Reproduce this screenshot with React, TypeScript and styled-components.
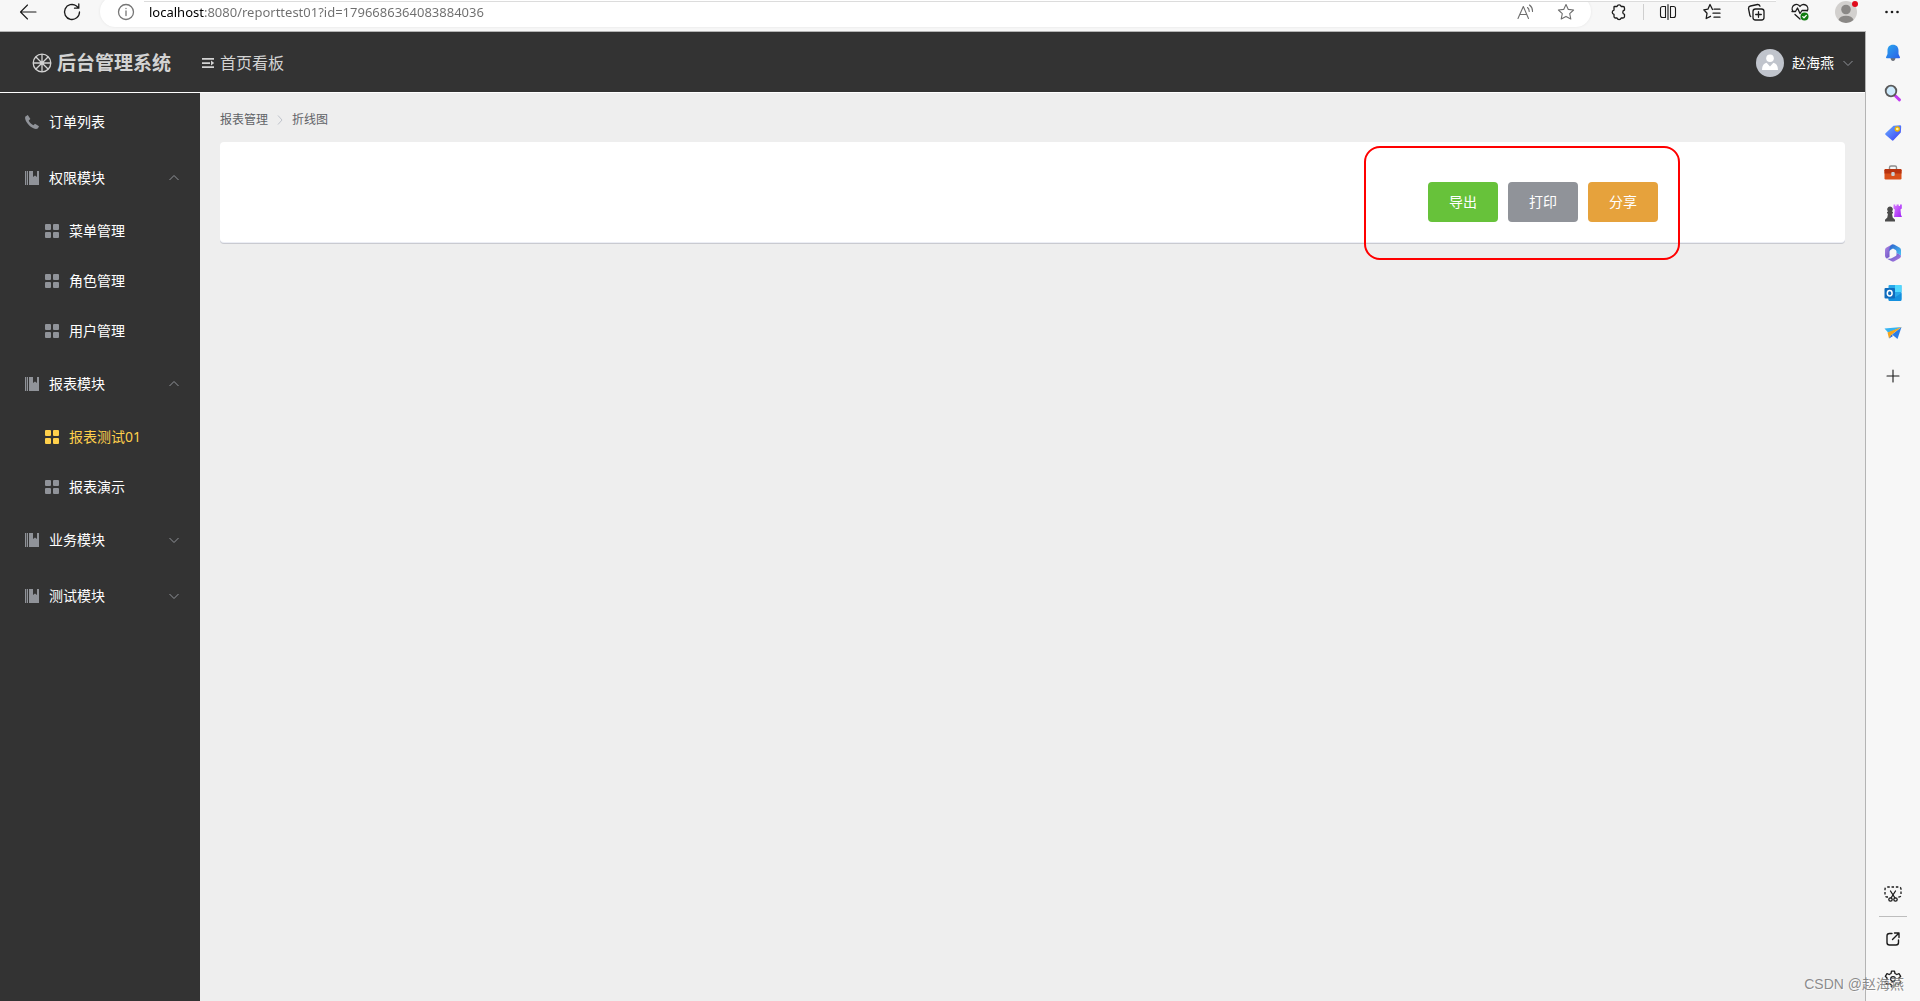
import React from "react";
import type { ReactNode } from "react";
import styled, { createGlobalStyle } from "styled-components";

const Global = createGlobalStyle`
  * { box-sizing: border-box; }
  body { margin: 0; overflow: hidden; font-family: "Noto Sans", "Noto Sans CJK SC", sans-serif; }
  button, input { font-family: inherit; }
  a { color: inherit; text-decoration: none; }
`;

const Page = styled.div`
  position: relative;
  height: 100vh;
  display: flex;
  flex-direction: column;
  background: #f7f7f7;
`;

/* ---------- browser toolbar ---------- */

const IconButton = styled.button<{ $color?: string; $wide?: boolean }>`
  flex: none;
  display: grid;
  place-items: center;
  width: ${(p) => (p.$wide ? 28 : 24)}px;
  height: 24px;
  padding: 0;
  border: 0;
  background: none;
  color: ${(p) => p.$color ?? "#1b1b1b"};
  svg { display: block; overflow: visible; }
`;

const BrowserBar = styled.div`
  position: relative;
  flex: none;
  display: flex;
  align-items: center;
  gap: 20px;
  height: 31px;
  padding: 0 16px 8px;
`;

const TabEdge = styled.div`
  position: absolute;
  left: 144px;
  right: 144px;
  top: 0;
  height: 2px;
  background: #fff;
  border-bottom: 1px solid #dcdcdc;
`;

const AddressPill = styled.div`
  flex: 1;
  display: flex;
  align-items: center;
  gap: 16px;
  height: 31px;
  margin: 0 -4px;
  padding: 0 13px 0 14px;
  border-radius: 16px;
  background: #fff;
  box-shadow: 0 0 3px rgba(0, 0, 0, 0.08);
`;

const Address = styled.input`
  flex: 1;
  min-width: 0;
  height: 24px;
  margin-left: -5px;
  padding: 0;
  border: 0;
  outline: 0;
  font-size: 13px;
  line-height: 20px;
  color: #6e6e6e;
  background: linear-gradient(to right, #000 55px, #6e6e6e 55px);
  background-clip: text;
  -webkit-background-clip: text;
  -webkit-text-fill-color: transparent;
`;

const Split = styled.span`
  flex: none;
  width: 1px;
  height: 16px;
  margin: 0 -8px;
  background: #cfcfcf;
`;

/* ---------- application ---------- */

const Body = styled.div`
  flex: 1;
  min-height: 0;
  display: flex;
`;

const Shell = styled.div`
  flex: 1;
  min-width: 0;
  display: flex;
  flex-direction: column;
  border-top: 1px solid #b4b4b4;
  border-right: 1px solid #b4b4b4;
`;

const Header = styled.header`
  flex: none;
  display: flex;
  align-items: center;
  height: 61px;
  padding: 2px 11px 0 32px;
  background: #333;
  border-bottom: 1px solid #fff;
  color: #d3d3d3;
`;

const Brand = styled.h1`
  display: flex;
  align-items: center;
  gap: 5px;
  width: 169px;
  margin: 0;
  font-size: 19px;
  line-height: 24px;
`;

const HomeLink = styled.a`
  display: flex;
  align-items: center;
  gap: 5px;
  margin-right: auto;
  font-size: 16px;
  line-height: 24px;
`;

const User = styled.button`
  display: flex;
  align-items: center;
  gap: 8px;
  padding: 0;
  border: 0;
  background: none;
  color: #fff;
  font-size: 14px;
  line-height: 20px;
`;

const Columns = styled.div`
  flex: 1;
  min-height: 0;
  display: flex;
`;

const Sidebar = styled.nav`
  flex: none;
  width: 200px;
  padding-top: 1px;
  background: #333;
`;

const MenuItem = styled.a<{ $sub?: boolean; $active?: boolean }>`
  display: flex;
  align-items: center;
  gap: 10px;
  height: ${(p) => (p.$sub ? 50 : 56)}px;
  padding: 0 20px 0 ${(p) => (p.$sub ? 45 : 25)}px;
  font-size: 14px;
  line-height: 20px;
  color: ${(p) => (p.$active ? "#ffd04b" : "#fff")};
  svg { flex: none; color: ${(p) => (p.$active ? "#ffd04b" : "#909399")}; }
  span { flex: 1; }
`;

const Main = styled.main`
  flex: 1;
  min-width: 0;
  padding: 17px 20px;
  background: #eee;
`;

const Crumbs = styled.nav`
  display: flex;
  align-items: center;
  gap: 6px;
  margin-bottom: 12px;
  font-size: 12px;
  line-height: 20px;
  color: #606266;
`;

const Card = styled.section`
  display: flex;
  justify-content: flex-end;
  padding: 40px 187px 20px 20px;
  border-radius: 4px;
  background: #fff;
  box-shadow: 0 1px 0 #eceef5, 0 2px 0 #c9cad0;
`;

const Actions = styled.div`
  position: relative;
  display: flex;
  gap: 10px;
`;

const Action = styled.button<{ $bg: string }>`
  height: 40px;
  padding: 0 21px;
  border: 0;
  border-radius: 4px;
  background: ${(p) => p.$bg};
  color: #fff;
  font-size: 14px;
  line-height: 20px;
`;

const Marker = styled.div`
  position: absolute;
  inset: -36px -22px -38px -64px;
  border: 2px solid #f00;
  border-radius: 16px;
  pointer-events: none;
`;

/* ---------- browser side rail ---------- */

const Rail = styled.aside`
  flex: none;
  display: flex;
  flex-direction: column;
  gap: 19px;
  width: 54px;
  padding: 10px 0;
`;

const RailGroup = styled.div<{ $end?: boolean }>`
  display: flex;
  flex-direction: column;
  align-items: center;
  gap: 16px;
  margin-top: ${(p) => (p.$end ? "auto" : 0)};
`;

const RailRule = styled.div`
  width: 28px;
  height: 1px;
  margin: -6px 0;
  background: #bdbdbd;
`;

const Watermark = styled.div`
  position: absolute;
  right: 16px;
  bottom: 7px;
  font-family: "Liberation Sans", "Noto Sans CJK SC", sans-serif;
  font-size: 14px;
  line-height: 20px;
  color: rgba(120, 120, 120, 0.85);
  text-shadow: 1px 1px 0 rgba(255, 255, 255, 0.7);
  pointer-events: none;
`;

/* ---------- icons ---------- */

const Line = ({ d, size = 18, w = 1.1, children }: { d?: string; size?: number; w?: number; children?: ReactNode }) => (
  <svg width={size} height={size} viewBox="0 0 18 18" fill="none" stroke="currentColor" strokeWidth={w} strokeLinecap="round" strokeLinejoin="round">
    {d && <path d={d} />}
    {children}
  </svg>
);

const chevrons = {
  up: "M1.500 8 6 3.500 10.500 8",
  down: "M1.500 4 6 8.500 10.500 4",
  right: "M4 1.500 8 6 4 10.500",
};
const Chevron = ({ dir, color = "#909399" }: { dir: keyof typeof chevrons; color?: string }) => (
  <svg width="12" height="12" viewBox="0 0 12 12" fill="none" stroke={color}>
    <path d={chevrons[dir]} />
  </svg>
);

const Phone = () => (
  <svg width="14" height="14" viewBox="0 0 14 14" fill="currentColor">
    <path d="M.4 1.400 2.800 0 5.400 4 3.700 5.600C4.600 7.600 6.200 9.200 8.400 10.300L10 8.700 14 11.200 13 13.300C11.800 14.200 10 14 8.400 13.300 4.800 11.600 1.400 8 .3 4.200 0 3 0 2.200.4 1.400Z" />
  </svg>
);
const Book = () => (
  <svg width="14" height="14" viewBox="0 0 14 14" fill="currentColor">
    <path d="M0 0H1V14H0ZM1.700 0H3V14H1.700ZM4 0H8V6L10 4.600 12 6V0H14V14H4Z" />
  </svg>
);
const Tiles = () => (
  <svg width="14" height="14" viewBox="0 0 14 14" fill="currentColor">
    <rect width="6" height="6" rx="1" />
    <rect x="8" width="6" height="6" rx="1" />
    <rect y="8" width="6" height="6" rx="1" />
    <rect x="8" y="8" width="6" height="6" rx="1" />
  </svg>
);

const Wheel = () => (
  <svg width="20" height="20" viewBox="0 0 20 20" fill="none" stroke="currentColor" strokeWidth="1.300">
    <circle cx="10" cy="10" r="8.800" />
    <path d="M10 1v18M1 10h18M3.700 3.700l12.600 12.600M16.300 3.700 3.700 16.300" />
    <circle cx="10" cy="10" r="1.800" fill="currentColor" stroke="none" />
  </svg>
);
const Unfold = () => (
  <svg width="14" height="14" viewBox="0 0 14 14" fill="currentColor">
    <path d="M1 2h12v1.700H1ZM1 6.200h8v1.700H1ZM1 10.300h12V12H1ZM10 4.600 13.200 7 10 9.400Z" />
  </svg>
);
const UserAvatar = () => (
  <svg width="28" height="28" viewBox="0 0 28 28">
    <circle cx="14" cy="14" r="14" fill="#c0c4cc" />
    <circle cx="14" cy="9.200" r="3.800" fill="#fff" />
    <path d="M6 20.500C6.200 16.500 8 14.300 10.600 13.800L14 17.500 17.400 13.800C20 14.300 21.800 16.500 22 20.500Q22 21 21.400 21H6.600Q6 21 6 20.500Z" fill="#fff" />
  </svg>
);

const ReadAloud = () => (
  <Line>
    <path d="M1 15.500 6.300 3.500 11.500 15.500M3 11.500h6.600M10.500 4.500Q12.300 6 12.200 8.500M12.500 2Q15.700 4.500 15.500 8.500" />
  </Line>
);
const starPath = "M9 1.500 11.300 6.400 16.600 7 12.700 10.700 13.800 16 9 13.400 4.200 16 5.300 10.700 1.400 7 6.700 6.400Z";
const Puzzle = () => (
  <Line w={1.3} d="M4.500 3.500H7A2.200 2.200 0 0 1 11.200 3.500H13A1.500 1.500 0 0 1 14.500 5V7A2.200 2.200 0 0 0 14.500 11.300V13.500A1.500 1.500 0 0 1 13 15H11.200A2.200 2.200 0 0 1 7 15H5.500A1.500 1.500 0 0 1 4 13.500V11.400A2.200 2.200 0 0 1 4 7.100V4Q4 3.500 4.500 3.500Z" />
);
const SplitScreen = () => (
  <Line w={1.1} d="M6.500 3.500H3.500A2 2 0 0 0 1.500 5.500V12.500A2 2 0 0 0 3.500 14.500H6.500ZM11.500 3.500H14.500A2 2 0 0 1 16.500 5.500V12.500A2 2 0 0 1 14.500 14.500H11.500ZM9 1.500V16.500" />
);
const Favorites = () => (
  <Line w={1.3} d="M9.500 6.500 7 1.500 4.900 6.200.8 6.800 4 10.300 3.200 15.500 7.500 13.300M11 6.200h6M10 10.200h7M11 14.200h6" />
);
const Collections = () => (
  <Line w={1.3}>
    <rect x="6" y="6" width="11" height="11" rx="2.500" />
    <path d="M11.500 8.700v5.600M8.700 11.500h5.600M3.700 13.500A2.500 2.500 0 0 1 2.700 11.500L1.500 5.500A2.500 2.500 0 0 1 3.500 3L10.500 1.500A2.500 2.500 0 0 1 13 3.200" />
  </Line>
);
const Essentials = () => (
  <Line w={1.3}>
    <path d="M1.800 8A4.200 4.200 0 0 1 9 3.500 4.200 4.200 0 0 1 16.200 8M1 8.500H4.500L6.500 5 9 10.500 11 7.500H16M4 11.500 9 16" />
    <circle cx="13.500" cy="13.500" r="4" fill="#107c10" stroke="none" />
    <path d="M11.800 13.600 13 14.800 15.300 12.400" stroke="#fff" />
  </Line>
);
const Profile = () => (
  <svg width="22" height="22" viewBox="0 0 22 22">
    <circle cx="11" cy="11" r="11" fill="#d2d0ce" />
    <circle cx="11" cy="8.500" r="4.800" fill="#8a8886" />
    <path d="M3.500 19C4.500 16 7 14.800 11 14.800S17.500 16 18.500 19A11 11 0 0 1 3.500 19Z" fill="#8a8886" />
    <circle cx="20" cy="3" r="3" fill="#e00b1c" />
  </svg>
);

const Art = ({ children }: { children: ReactNode }) => (
  <svg width="18" height="18" viewBox="0 0 18 18">{children}</svg>
);
const Grad = ({ id, from, to }: { id: string; from: string; to: string }) => (
  <linearGradient id={id} x1="0" y1="0" x2="1" y2="1">
    <stop stopColor={from} />
    <stop offset="1" stopColor={to} />
  </linearGradient>
);

const Bell = () => (
  <Art>
    <Grad id="bell" from="#2aa8ee" to="#2a5fe8" />
    <path d="M6.500 14h5Q11 17 9 17T6.500 14Z" fill="#6b6f78" />
    <path d="M9 .8C5.500.8 3.500 3.200 3.500 6.500V10L2 13.200Q1.800 14.200 2.800 14.200H15.200Q16.200 14.200 16 13.200L14.500 10V6.500C14.500 3.200 12.500.8 9 .8Z" fill="url(#bell)" />
  </Art>
);
const Search = () => (
  <Art>
    <path d="M11 11.500 15.500 15.800" stroke="#c13bf0" strokeWidth="3" strokeLinecap="round" />
    <circle cx="7" cy="7" r="5.300" fill="#cdeafc" stroke="#5a5a5a" strokeWidth="1.800" />
  </Art>
);
const Tag = () => (
  <Art>
    <Grad id="tag" from="#6ab2ff" to="#3a3cf5" />
    <path d="M9.500 1.800 16 1.200Q17.200 1.200 17.200 2.400L16.800 8.500 9.500 16.300Q8.700 17 7.900 16.300L1.500 10.800Q.7 10 1.500 9.200Z" fill="url(#tag)" />
    <circle cx="13.300" cy="5" r="2" fill="#fff3b0" stroke="#f2b600" strokeWidth="1.300" />
  </Art>
);
const Toolbox = () => (
  <Art>
    <path d="M5.500 5V3.500Q5.500 2 7 2H11Q12.500 2 12.500 3.500V5" fill="none" stroke="#8c8c8c" strokeWidth="1.400" />
    <rect x=".5" y="5" width="17" height="10.500" rx="1.200" fill="#d9501a" />
    <path d="M.5 6.200Q.5 5 1.700 5H16.300Q17.500 5 17.500 6.200V9.500H.5Z" fill="#b8330f" />
    <rect x="7.300" y="8" width="3.400" height="4" rx="1" fill="#c9d0d4" />
  </Art>
);
const Games = () => (
  <Art>
    <Grad id="rook" from="#d77bff" to="#a020f5" />
    <path d="M9.500.5H11.300V2H12.500V.5H14.700V2H16V.5H17.800V4.500L16.500 5.500 17 11 18 13H10L10.800 5.500 9.500 4.500Z" fill="url(#rook)" />
    <path d="M6 2.500A2.800 2.800 0 0 1 8 7.300L9 8.300V9.500H8L8.700 13.500 11 15.700V17.500H1V15.700L3.300 13.500 4 9.500H3V8.300L4 7.300A2.800 2.800 0 0 1 6 2.500Z" fill="#4b4b4b" />
  </Art>
);
const M365 = () => (
  <Art>
    <Grad id="m1" from="#b58be8" to="#5a48bc" />
    <Grad id="m2" from="#2a5fcb" to="#4cc3f5" />
    <Grad id="m3" from="#4a56c8" to="#b57be0" />
    <path d="M8 .5 2.500 3.500Q1 4.400 1 6V12Q1 13.500 2.500 14.400L5.500 13V7.500Q5.500 6.500 6.300 6Z" fill="url(#m1)" />
    <path d="M8 .5Q9 0 10.500.7L15.800 3.700Q17 4.400 17 6V11.500L12.500 9V7.500Q12.500 6.500 11.700 6L9 4.600 6.300 6Q5.500 6.500 5.500 7.500V9C5 5 5.500 2 8 .5Z" fill="url(#m2)" />
    <path d="M2.500 14.400 7.700 17.300Q9 18 10.400 17.300L15.700 14.300Q17 13.500 17 11.800 15.500 10 12.500 9V10.500Q12.500 11.500 11.700 12L9 13.500Q6 15.500 2.500 14.400Z" fill="url(#m3)" />
  </Art>
);
const Outlook = () => (
  <Art>
    <rect x="4.500" y="1" width="13" height="15" rx="1" fill="#28a8ea" />
    <path d="M11 1H17.500V8H11Z" fill="#50d9ff" />
    <path d="M4.500 9 11.500 13 17.500 9V16Q17.500 17 16.500 17H5.500Q4.500 17 4.500 16Z" fill="#1490df" />
    <rect x=".5" y="4" width="10.500" height="10.500" rx="1" fill="#0f6cbd" />
    <ellipse cx="5.700" cy="9.200" rx="2.400" ry="2.700" fill="none" stroke="#fff" strokeWidth="1.500" />
  </Art>
);
const Plane = () => (
  <Art>
    <path d="M.5 4.500 17.500 3 4.500 9Z" fill="#35b4f2" />
    <path d="M17.500 3 13.500 15 8 10.500Z" fill="#2a7de8" />
    <path d="M17.500 3 3.500 8.500 5 14.500 7.500 10.800Z" fill="#f5a51d" />
    <path d="M7.500 10.800 5 14.500 9 12Z" fill="#1d62cf" />
  </Art>
);
const Snip = () => (
  <Line w={1.3}>
    <path d="M4 12H3A2 2 0 0 1 1 10V4A2 2 0 0 1 3 2H15A2 2 0 0 1 17 4V10A2 2 0 0 1 15 12H14" strokeDasharray="2.500 1.800" strokeLinecap="butt" />
    <path d="M6.500 6 11 13M11.500 6 7 13" />
    <circle cx="6.500" cy="14.500" r="1.700" />
    <circle cx="11.500" cy="14.500" r="1.700" />
  </Line>
);
const External = () => (
  <Line w={1.4} d="M8 3.500H5.500A2.500 2.500 0 0 0 3 6V12.500A2.500 2.500 0 0 0 5.500 15H12A2.500 2.500 0 0 0 14.500 12.500V10M10.500 3H15V7.500M15 3 8.500 9.500" />
);
const Gear = () => (
  <Line w={1.3}>
    <path d="M7.500 1.200H10.500L11 3.500 12.800 4.500 15 3.700 16.700 6.300 15 8V10L16.700 11.700 15 14.300 12.800 13.500 11 14.500 10.500 16.800H7.500L7 14.500 5.200 13.500 3 14.300 1.300 11.700 3 10V8L1.300 6.300 3 3.700 5.200 4.500 7 3.500Z" />
    <circle cx="9" cy="9" r="2.300" />
  </Line>
);

/* ---------- data ---------- */

type Entry = { label: string; kind: "phone" | "group" | "page"; open?: boolean; active?: boolean };
const menu: Entry[] = [
  { label: "订单列表", kind: "phone" },
  { label: "权限模块", kind: "group", open: true },
  { label: "菜单管理", kind: "page" },
  { label: "角色管理", kind: "page" },
  { label: "用户管理", kind: "page" },
  { label: "报表模块", kind: "group", open: true },
  { label: "报表测试01", kind: "page", active: true },
  { label: "报表演示", kind: "page" },
  { label: "业务模块", kind: "group" },
  { label: "测试模块", kind: "group" },
];
const menuIcons = { phone: Phone, group: Book, page: Tiles };
const railApps = [Bell, Search, Tag, Toolbox, Games, M365, Outlook, Plane];

export default function App() {
  return (
    <Page>
      <Global />
      <BrowserBar>
        <IconButton aria-label="Back"><Line d="M17 9H1.500M8.500 2 1.500 9l7 7" /></IconButton>
        <IconButton aria-label="Reload"><Line w={1.3} d="M16.500 9A7.500 7.500 0 1 1 13.500 3L15.500 5M15.800 1V5.200H11.500" /></IconButton>
        <AddressPill>
          <IconButton $color="#767676" aria-label="Site information">
            <Line w={1.3}><circle cx="9" cy="9" r="7.500" /><path d="M9 8v4.500M9 5.300v.2" /></Line>
          </IconButton>
          <Address aria-label="Address" defaultValue="localhost:8080/reporttest01?id=1796686364083884036" />
          <IconButton $color="#6e6e6e" aria-label="Read aloud"><ReadAloud /></IconButton>
          <IconButton $color="#6e6e6e" aria-label="Add to favorites"><Line d={starPath} /></IconButton>
        </AddressPill>
        <IconButton aria-label="Extensions"><Puzzle /></IconButton>
        <Split />
        <IconButton aria-label="Split screen"><SplitScreen /></IconButton>
        <IconButton aria-label="Favorites"><Favorites /></IconButton>
        <IconButton aria-label="Collections"><Collections /></IconButton>
        <IconButton aria-label="Browser essentials"><Essentials /></IconButton>
        <IconButton $wide aria-label="Profile"><Profile /></IconButton>
        <IconButton aria-label="More">
          <svg width="14" height="4" viewBox="0 0 14 4" fill="currentColor">
            <circle cx="1.500" cy="2" r="1.300" /><circle cx="7" cy="2" r="1.300" /><circle cx="12.500" cy="2" r="1.300" />
          </svg>
        </IconButton>
        <TabEdge />
      </BrowserBar>
      <Body>
        <Shell>
          <Header>
            <Brand><Wheel />后台管理系统</Brand>
            <HomeLink href="#"><Unfold />首页看板</HomeLink>
            <User><UserAvatar />赵海燕<Chevron dir="down" /></User>
          </Header>
          <Columns>
            <Sidebar>
              {menu.map((m) => {
                const Icon = menuIcons[m.kind];
                return (
                  <MenuItem key={m.label} href="#" $sub={m.kind === "page"} $active={m.active}>
                    <Icon />
                    <span>{m.label}</span>
                    {m.kind === "group" && <Chevron dir={m.open ? "up" : "down"} />}
                  </MenuItem>
                );
              })}
            </Sidebar>
            <Main>
              <Crumbs>
                <a href="#">报表管理</a>
                <Chevron dir="right" color="#c0c4cc" />
                <span>折线图</span>
              </Crumbs>
              <Card>
                <Actions>
                  <Action $bg="#67c23a">导出</Action>
                  <Action $bg="#909399">打印</Action>
                  <Action $bg="#e6a23c">分享</Action>
                  <Marker />
                </Actions>
              </Card>
            </Main>
          </Columns>
        </Shell>
        <Rail>
          <RailGroup>
            {railApps.map((Icon, i) => (
              <IconButton key={i}><Icon /></IconButton>
            ))}
          </RailGroup>
          <RailGroup>
            <IconButton aria-label="Customize"><Line d="M9 3v12M3 9h12" /></IconButton>
          </RailGroup>
          <RailGroup $end>
            <IconButton aria-label="Screenshot"><Snip /></IconButton>
            <RailRule />
            <IconButton aria-label="Open externally"><External /></IconButton>
            <IconButton aria-label="Settings"><Gear /></IconButton>
          </RailGroup>
        </Rail>
      </Body>
      <Watermark>CSDN @赵海燕</Watermark>
    </Page>
  );
}
